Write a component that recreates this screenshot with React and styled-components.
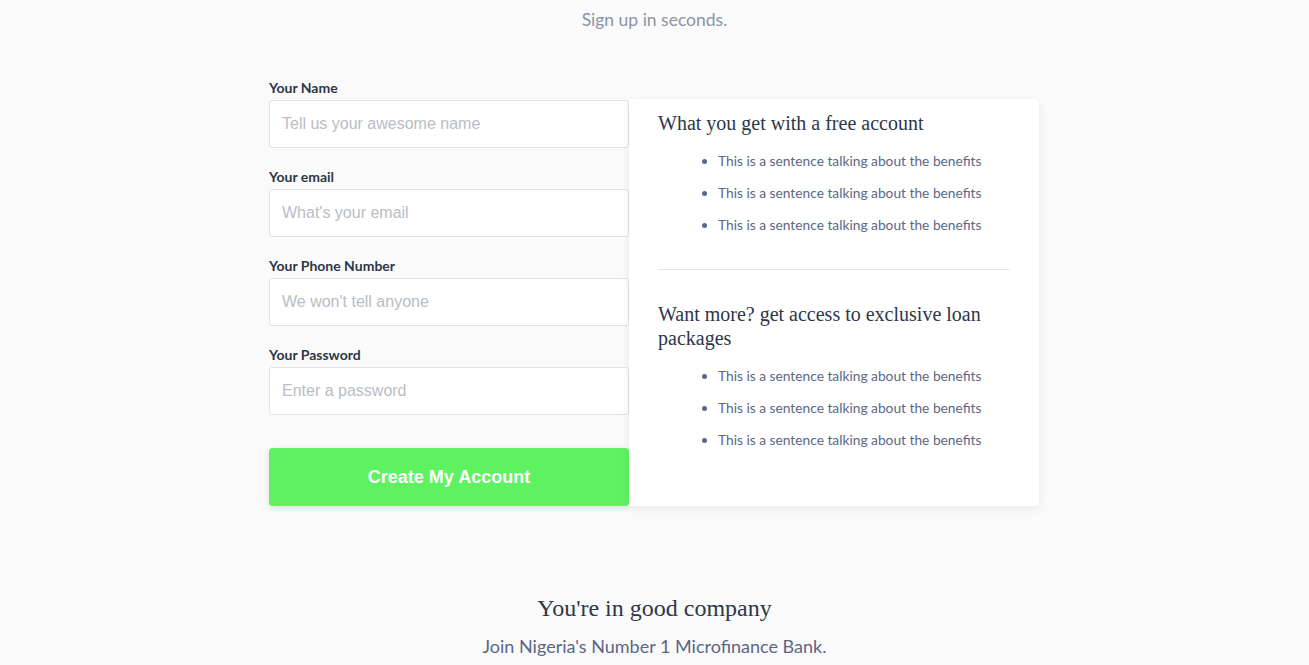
import React from "react";
import styled, { createGlobalStyle } from "styled-components";

const Global = createGlobalStyle`
  html, body { margin: 0; padding: 0; background: #fafafa; }
  body { font-family: Lato, "Noto Sans", sans-serif; color: #2d3748; }
  * { box-sizing: border-box; }
`;

const Page = styled.div`
  width: 771px;
  margin: 0 auto;
  padding-top: 8px;
`;

const Tagline = styled.p`
  margin: 0;
  text-align: center;
  font-size: 17.5px;
  line-height: 24px;
  color: #8a94a6;
`;

const Row = styled.div`
  display: flex;
  align-items: flex-start;
  margin-top: 47px;
`;

const Form = styled.form`
  width: 360px;
  display: flex;
  flex-direction: column;
`;

const Field = styled.div`
  display: flex;
  flex-direction: column;
  margin-bottom: 20px;
`;

const Label = styled.label`
  font-size: 14px;
  line-height: 17px;
  font-weight: 700;
  color: #2d3748;
  margin-bottom: 4px;
`;

const Input = styled.input`
  height: 48px;
  width: 100%;
  border: 1px solid #dfe2e6;
  border-radius: 3px;
  background: #fff;
  padding: 0 12px;
  font-family: "Liberation Sans", Arial, sans-serif;
  font-size: 16px;
  color: #2d3748;
  outline: none;
  &::placeholder { color: #b9bdc4; }
`;

const Button = styled.button`
  margin-top: 13px;
  height: 58px;
  width: 100%;
  border: none;
  border-radius: 4px;
  background: #5ef261;
  color: #fff;
  font-family: "Liberation Sans", Arial, sans-serif;
  font-weight: 700;
  font-size: 18px;
  box-shadow: 0 2px 6px rgba(0, 0, 0, 0.12);
  cursor: pointer;
`;

const Card = styled.div`
  width: 410px;
  margin-top: 20px;
  background: #fff;
  border-radius: 0 5px 5px 0;
  box-shadow: 0 3px 10px rgba(0, 0, 0, 0.07);
  padding: 12px 29px 50px 29px;
`;

const CardTitle = styled.h3`
  margin: ${(p) => (p.$spaced ? "32px 0 0" : "0")};
  font-family: "Liberation Serif", "Times New Roman", serif;
  font-weight: 400;
  font-size: 20px;
  line-height: 24px;
  color: #2d3748;
`;

const List = styled.ul`
  margin: 10px 0 0;
  padding-left: 60px;
  list-style: disc;
  color: #5a6785;
`;

const Item = styled.li`
  font-size: 13.75px;
  line-height: 32px;
  &::marker { color: #5a6785; }
`;

const Divider = styled.hr`
  margin: 28px 0 0;
  border: none;
  border-top: 1px solid #e2e4e8;
`;

const Company = styled.section`
  margin-top: 87px;
  text-align: center;
`;

const CompanyTitle = styled.h2`
  margin: 0;
  font-family: "Liberation Serif", "Times New Roman", serif;
  font-weight: 400;
  font-size: 24px;
  line-height: 30px;
  color: #2d3748;
`;

const CompanyText = styled.p`
  margin: 11px 0 0;
  font-size: 18px;
  line-height: 24px;
  color: #5a6785;
`;

const fields = [
  { label: "Your Name", placeholder: "Tell us your awesome name", type: "text" },
  { label: "Your email", placeholder: "What's your email", type: "email" },
  { label: "Your Phone Number", placeholder: "We won't tell anyone", type: "tel" },
  { label: "Your Password", placeholder: "Enter a password", type: "password" },
];

const benefit = "This is a sentence talking about the benefits";

export default function App() {
  return (
    <>
      <Global />
      <Page>
        <Tagline>Sign up in seconds.</Tagline>
        <Row>
          <Form onSubmit={(e) => e.preventDefault()}>
            {fields.map((f) => (
              <Field key={f.label}>
                <Label>{f.label}</Label>
                <Input type={f.type} placeholder={f.placeholder} />
              </Field>
            ))}
            <Button type="submit">Create My Account</Button>
          </Form>
          <Card>
            <CardTitle>What you get with a free account</CardTitle>
            <List>
              <Item>{benefit}</Item>
              <Item>{benefit}</Item>
              <Item>{benefit}</Item>
            </List>
            <Divider />
            <CardTitle $spaced>Want more? get access to exclusive loan packages</CardTitle>
            <List>
              <Item>{benefit}</Item>
              <Item>{benefit}</Item>
              <Item>{benefit}</Item>
            </List>
          </Card>
        </Row>
        <Company>
          <CompanyTitle>You're in good company</CompanyTitle>
          <CompanyText>Join Nigeria's Number 1 Microfinance Bank.</CompanyText>
        </Company>
      </Page>
    </>
  );
}
